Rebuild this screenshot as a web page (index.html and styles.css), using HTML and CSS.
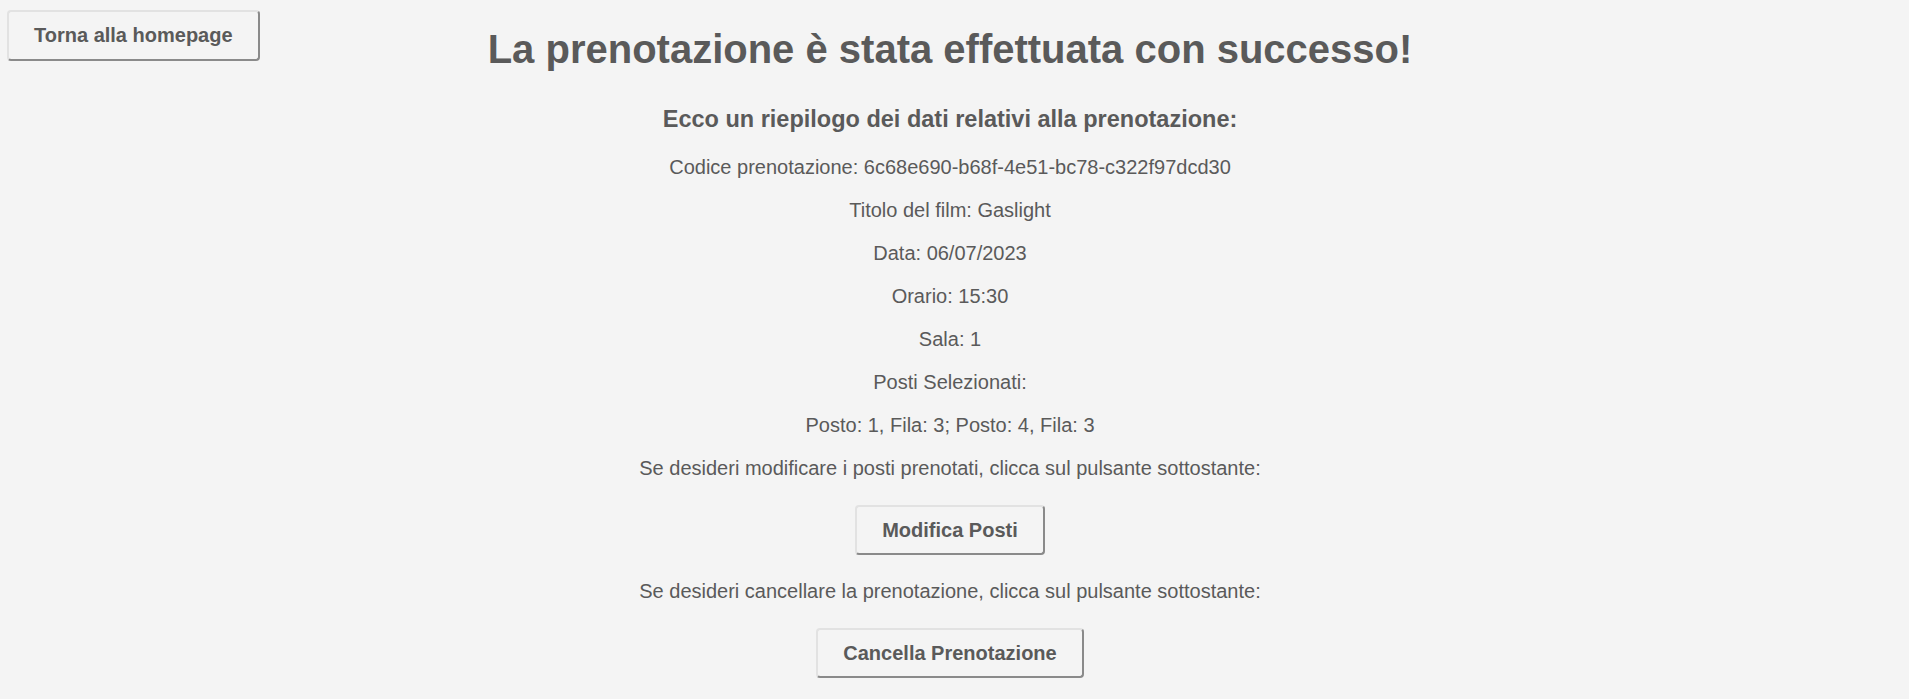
FILE: index.html
```html
<!DOCTYPE html>
<html lang="it">
<head>
<meta charset="utf-8">
<title>Prenotazione effettuata</title>
<link rel="stylesheet" href="styles.css">
</head>
<body>
<div class="page">
  <button class="btn btn-home">Torna alla homepage</button>
  <main class="content">
    <h1 class="title">La prenotazione è stata effettuata con successo!</h1>
    <h3 class="subtitle">Ecco un riepilogo dei dati relativi alla prenotazione:</h3>
    <p class="line first">Codice prenotazione: 6c68e690-b68f-4e51-bc78-c322f97dcd30</p>
    <p class="line">Titolo del film: Gaslight</p>
    <p class="line">Data: 06/07/2023</p>
    <p class="line">Orario: 15:30</p>
    <p class="line">Sala: 1</p>
    <p class="line">Posti Selezionati:</p>
    <p class="line">Posto: 1, Fila: 3; Posto: 4, Fila: 3</p>
    <p class="line">Se desideri modificare i posti prenotati, clicca sul pulsante sottostante:</p>
    <button class="btn btn-action">Modifica Posti</button>
    <p class="line after-btn">Se desideri cancellare la prenotazione, clicca sul pulsante sottostante:</p>
    <button class="btn btn-action btn-last">Cancella Prenotazione</button>
  </main>
</div>
</body>
</html>
```
FILE: styles.css
```css
html, body {
  margin: 0;
  padding: 0;
  background: #f4f4f4;
}
body {
  font-family: "Liberation Sans", Arial, sans-serif;
  color: #5a5a5a;
}
.page {
  position: relative;
  width: 1900px;
}
.content {
  display: flex;
  flex-direction: column;
  align-items: center;
  text-align: center;
  padding-top: 26px;
}
.title {
  font-size: 40px;
  font-weight: bold;
  margin: 0;
  line-height: 46px;
}
.subtitle {
  font-size: 23.5px;
  font-weight: bold;
  margin: 34px 0 0;
  line-height: 27px;
}
.line {
  font-size: 20px;
  margin: 20px 0 0;
  line-height: 23px;
}
.line.first {
  margin-top: 23px;
}
.line.after-btn {
  margin-top: 25px;
}
.btn {
  font-family: "Liberation Sans", Arial, sans-serif;
  font-weight: bold;
  color: #5a5a5a;
  background: #f4f4f4;
  border: 2px solid #e2e2e2;
  border-right-color: #8a8a8a;
  border-bottom-color: #8a8a8a;
  border-radius: 4px;
  height: 51px;
  padding: 0 25px;
  font-size: 20px;
}
.btn-home {
  position: absolute;
  left: 7px;
  top: 10px;
}
.btn-action {
  margin-top: 25px;
  height: 50px;
}
.btn-action.btn-last {
  margin-top: 25px;
}
```
